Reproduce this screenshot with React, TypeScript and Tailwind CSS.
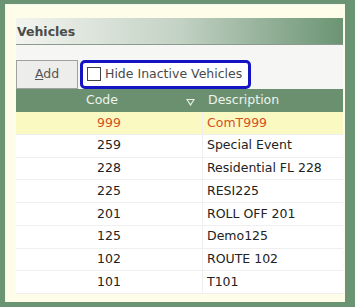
import { useState } from 'react';

type Vehicle = { code: string; description: string };

const vehicles: Vehicle[] = [
  { code: '999', description: 'ComT999' },
  { code: '259', description: 'Special Event' },
  { code: '228', description: 'Residential FL 228' },
  { code: '225', description: 'RESI225' },
  { code: '201', description: 'ROLL OFF 201' },
  { code: '125', description: 'Demo125' },
  { code: '102', description: 'ROUTE 102' },
  { code: '101', description: 'T101' },
];

function App() {
  const [hideInactive, setHideInactive] = useState(false);
  const [selected, setSelected] = useState('999');

  return (
    <div
      className="w-[355px] h-[307px] bg-[#6b9474] pt-[4px] pl-[5px] pr-[10px] pb-[5px]"
      style={{ fontFamily: '"DejaVu Sans", Verdana, sans-serif' }}
    >
      <div className="h-full bg-[#fdfdea] border-t border-l border-[#f4f7ee] pt-[13px] pl-[10px] pr-[2px] pb-[8px] flex flex-col">
        {/* title bar */}
        <div className="h-[27px] flex items-center pl-[1px] pt-[3px] bg-gradient-to-r from-[#f3f4f0] via-[#c3d2c4] to-[#6b9474] border-b border-[#8c9a8e]">
          <span className="text-[12.5px] font-bold text-[#4b4b4b]">Vehicles</span>
        </div>

        <div className="flex flex-col bg-[#f6f6f4]">
          {/* toolbar */}
          <div className="mt-[15px] h-[29px] flex items-stretch gap-[2px]">
            <button className="w-[62px] bg-[#ededeb] border border-[#a0a0a0] text-[12.5px] text-[#555] flex items-center justify-center">
              <span>
                <span className="underline">A</span>dd
              </span>
            </button>
            <label className="w-[171px] rounded-[5px] border-[3px] border-[#1414c4] bg-white flex items-center pl-[4px] gap-[4px] cursor-pointer">
              <span
                className="w-[14px] h-[14px] border border-[#444] bg-white flex items-center justify-center"
                onClick={() => setHideInactive(!hideInactive)}
              >
                {hideInactive && <span className="text-[10px] leading-none text-[#333]">✓</span>}
              </span>
              <span className="text-[12.5px] text-[#4a4a4a] whitespace-nowrap">Hide Inactive Vehicles</span>
            </label>
          </div>

          {/* table */}
          <div className="flex flex-col bg-white">
            <div className="h-[23.5px] flex bg-[#6b9070] text-[12.5px] text-[#eef4ee]">
              <div className="w-[187px] flex items-center">
                <span className="flex-1 text-center pl-[2px]">Code</span>
                <svg width="9" height="8" viewBox="0 0 9 8" className="mr-[8px] mt-[3px]">
                  <path d="M1 1.5 L8 1.5 L4.5 7 Z" fill="none" stroke="#e8f0e8" strokeWidth="1.2" />
                </svg>
              </div>
              <div className="flex-1 flex items-center pl-[5px]">Description</div>
            </div>
            {vehicles.map((v) => {
              const isSel = v.code === selected;
              return (
                <div
                  key={v.code}
                  onClick={() => setSelected(v.code)}
                  className={
                    'h-[22.75px] flex text-[12.5px] border-b border-[#efefef] ' +
                    (isSel ? 'bg-[#fbf9c2] text-[#d5501f]' : 'bg-white text-[#222]')
                  }
                >
                  <div className="w-[187px] flex items-center justify-center border-r border-[#efefef]">{v.code}</div>
                  <div className="flex-1 flex items-center pl-[4px]">{v.description}</div>
                </div>
              );
            })}
          </div>
        </div>
      </div>
    </div>
  );
}

export default App;
